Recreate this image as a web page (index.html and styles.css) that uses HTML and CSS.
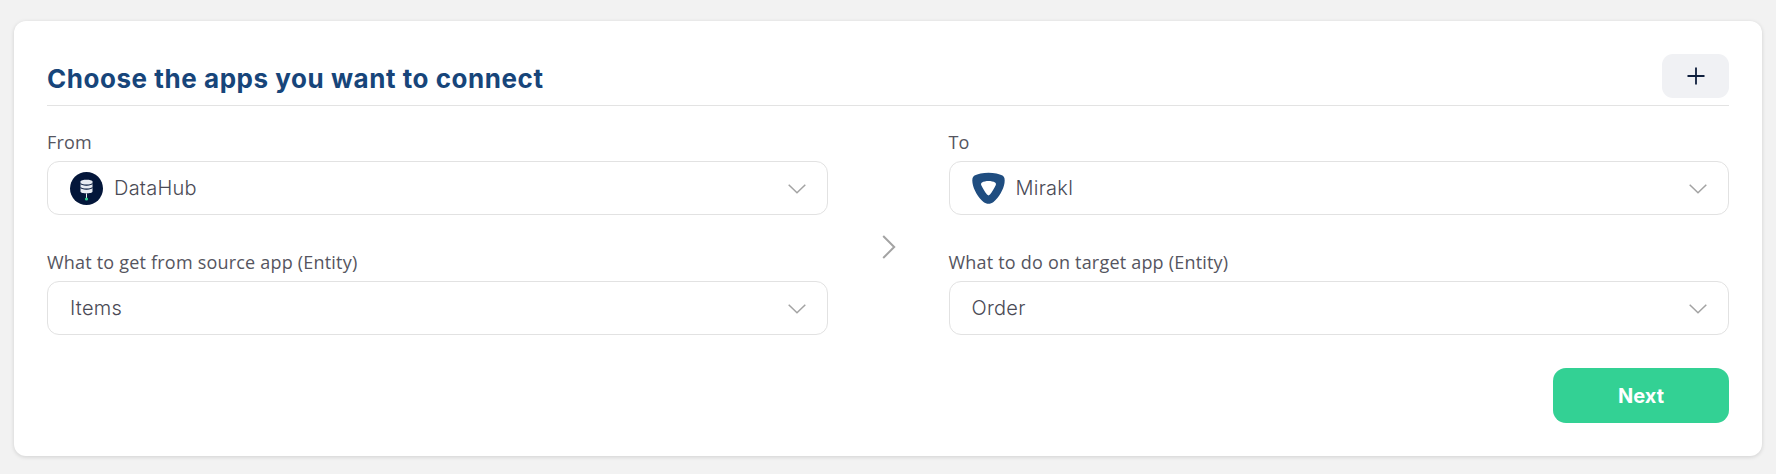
FILE: index.html
```html
<!DOCTYPE html>
<html lang="en">
<head>
<meta charset="utf-8">
<title>Choose the apps</title>
<link rel="stylesheet" href="styles.css">
</head>
<body>
<main class="card">
  <header class="head">
    <h1 class="title">Choose the apps you want to connect</h1>
    <button class="add" type="button" aria-label="Add">
      <svg width="18" height="18" viewBox="0 0 18 18"><path d="M9 0.5V17.5M0.5 9H17.5" stroke="#0f1f3d" stroke-width="1.8" fill="none"/></svg>
    </button>
  </header>
  <div class="grid">
    <div class="col">
      <div class="field">
        <label class="label">From</label>
        <div class="select">
          <svg class="logo" width="33" height="33" viewBox="0 0 33 33">
            <circle cx="16.5" cy="16.5" r="16.5" fill="#03163a"/>
            <path d="M10.5 9.5C10.5 7 22.5 7 22.5 9.5V19.5C22.5 22 10.5 22 10.5 19.5Z" fill="#e8ebf2"/>
            <path d="M10.5 11.5C12 13.6 21 13.6 22.5 11.5M10.5 15.5C12 17.6 21 17.6 22.5 15.5" stroke="#03163a" stroke-width="1.1" fill="none"/>
            <path d="M16.5 21.5V26" stroke="#e8ebf2" stroke-width="1"/>
            <circle cx="16.5" cy="27" r="1.6" fill="#2fd18f"/>
          </svg>
          <span class="value">DataHub</span>
          <svg class="chev" width="18" height="10" viewBox="0 0 18 10"><path d="M0.7 0.7L9 8.7L17.3 0.7" stroke="#a3a3a3" stroke-width="1.5" fill="none"/></svg>
        </div>
      </div>
      <div class="field">
        <label class="label">What to get from source app (Entity)</label>
        <div class="select">
          <span class="value">Items</span>
          <svg class="chev" width="18" height="10" viewBox="0 0 18 10"><path d="M0.7 0.7L9 8.7L17.3 0.7" stroke="#a3a3a3" stroke-width="1.5" fill="none"/></svg>
        </div>
      </div>
    </div>
    <div class="mid">
      <svg width="14" height="24" viewBox="0 0 14 24"><path d="M1.2 1L12.2 12L1.2 23" stroke="#a3a3a3" stroke-width="2" fill="none"/></svg>
    </div>
    <div class="col">
      <div class="field">
        <label class="label">To</label>
        <div class="select">
          <svg class="logo" width="33" height="33" viewBox="0 0 33 33">
            <path fill-rule="evenodd" fill="#1f4d80" d="M16.5 0.8C22 0.8 27.5 2 30.5 3.6C32.6 4.8 33 7.5 32.5 11C31.6 17.5 26.5 26 21.5 30C18.5 32.4 14.5 32.4 11.5 30C6.5 26 1.4 17.5 0.5 11C0 7.5 0.4 4.8 2.5 3.6C5.5 2 11 0.8 16.5 0.8ZM16.5 9C14 9 11.5 9.6 10 10.4C9 11 8.8 12 9.3 13.2C10.6 16.2 13 20 15 22.6C15.9 23.7 17.1 23.7 18 22.6C20 20 22.4 16.2 23.7 13.2C24.2 12 24 11 23 10.4C21.5 9.6 19 9 16.5 9Z"/>
          </svg>
          <span class="value">Mirakl</span>
          <svg class="chev" width="18" height="10" viewBox="0 0 18 10"><path d="M0.7 0.7L9 8.7L17.3 0.7" stroke="#a3a3a3" stroke-width="1.5" fill="none"/></svg>
        </div>
      </div>
      <div class="field">
        <label class="label">What to do on target app (Entity)</label>
        <div class="select">
          <span class="value">Order</span>
          <svg class="chev" width="18" height="10" viewBox="0 0 18 10"><path d="M0.7 0.7L9 8.7L17.3 0.7" stroke="#a3a3a3" stroke-width="1.5" fill="none"/></svg>
        </div>
      </div>
    </div>
  </div>
  <footer class="foot">
    <button class="next" type="button">Next</button>
  </footer>
</main>
</body>
</html>
```
FILE: styles.css
```css
* { box-sizing: border-box; }
html, body { margin: 0; height: 100%; }
body {
  background: #f2f2f2;
  padding: 21px 14px 18px 14px;
  font-family: "Open Sans", "Liberation Sans", sans-serif;
  overflow: hidden;
}
.card {
  background: #fff;
  border-radius: 12px;
  height: 435px;
  padding: 33px 33px 0 33px;
  box-shadow: 0 1px 4px rgba(0, 0, 0, 0.14);
}
.head {
  display: flex;
  align-items: flex-end;
  justify-content: space-between;
  height: 52px;
  border-bottom: 1px solid #e3e3e3;
  padding-bottom: 7px;
}
.title {
  margin: 0 0 4px 0;
  font-family: Inter, "Open Sans", sans-serif;
  font-size: 26px;
  font-weight: 700;
  line-height: 30px;
  color: #17457a;
  letter-spacing: 0.55px;
}
.add {
  width: 67px;
  height: 44px;
  border: 0;
  border-radius: 11px;
  background: #f0f1f4;
  display: flex;
  align-items: center;
  justify-content: center;
  padding: 0;
}
.grid {
  display: grid;
  grid-template-columns: 780.5px 1fr 780.5px;
  margin-top: 22px;
}
.col { display: flex; flex-direction: column; gap: 33px; }
.field { display: flex; flex-direction: column; }
.label {
  font-size: 18px;
  line-height: 28px;
  height: 33px;
  color: #555560;
  letter-spacing: 0.2px;
}
.select {
  height: 54px;
  border: 1px solid #e2e2e2;
  border-radius: 12px;
  display: flex;
  align-items: center;
  padding: 0 21px 0 22px;
  gap: 11px;
}
.logo { flex: none; }
.value {
  flex: 1;
  font-family: Inter, "Open Sans", sans-serif;
  font-size: 20px;
  font-weight: 300;
  color: #4a4a55;
  letter-spacing: 0.25px;
}
.chev { flex: none; margin-top: 1px; }
.mid {
  display: flex;
  align-items: center;
  justify-content: center;
  padding: 31px 0 0 2px;
}
.foot {
  display: flex;
  justify-content: flex-end;
  margin-top: 33px;
}
.next {
  width: 176px;
  height: 55px;
  border: 0;
  border-radius: 13px;
  background: #33d194;
  color: #fff;
  font-family: Inter, "Open Sans", sans-serif;
  font-size: 20px;
  font-weight: 700;
}
```
